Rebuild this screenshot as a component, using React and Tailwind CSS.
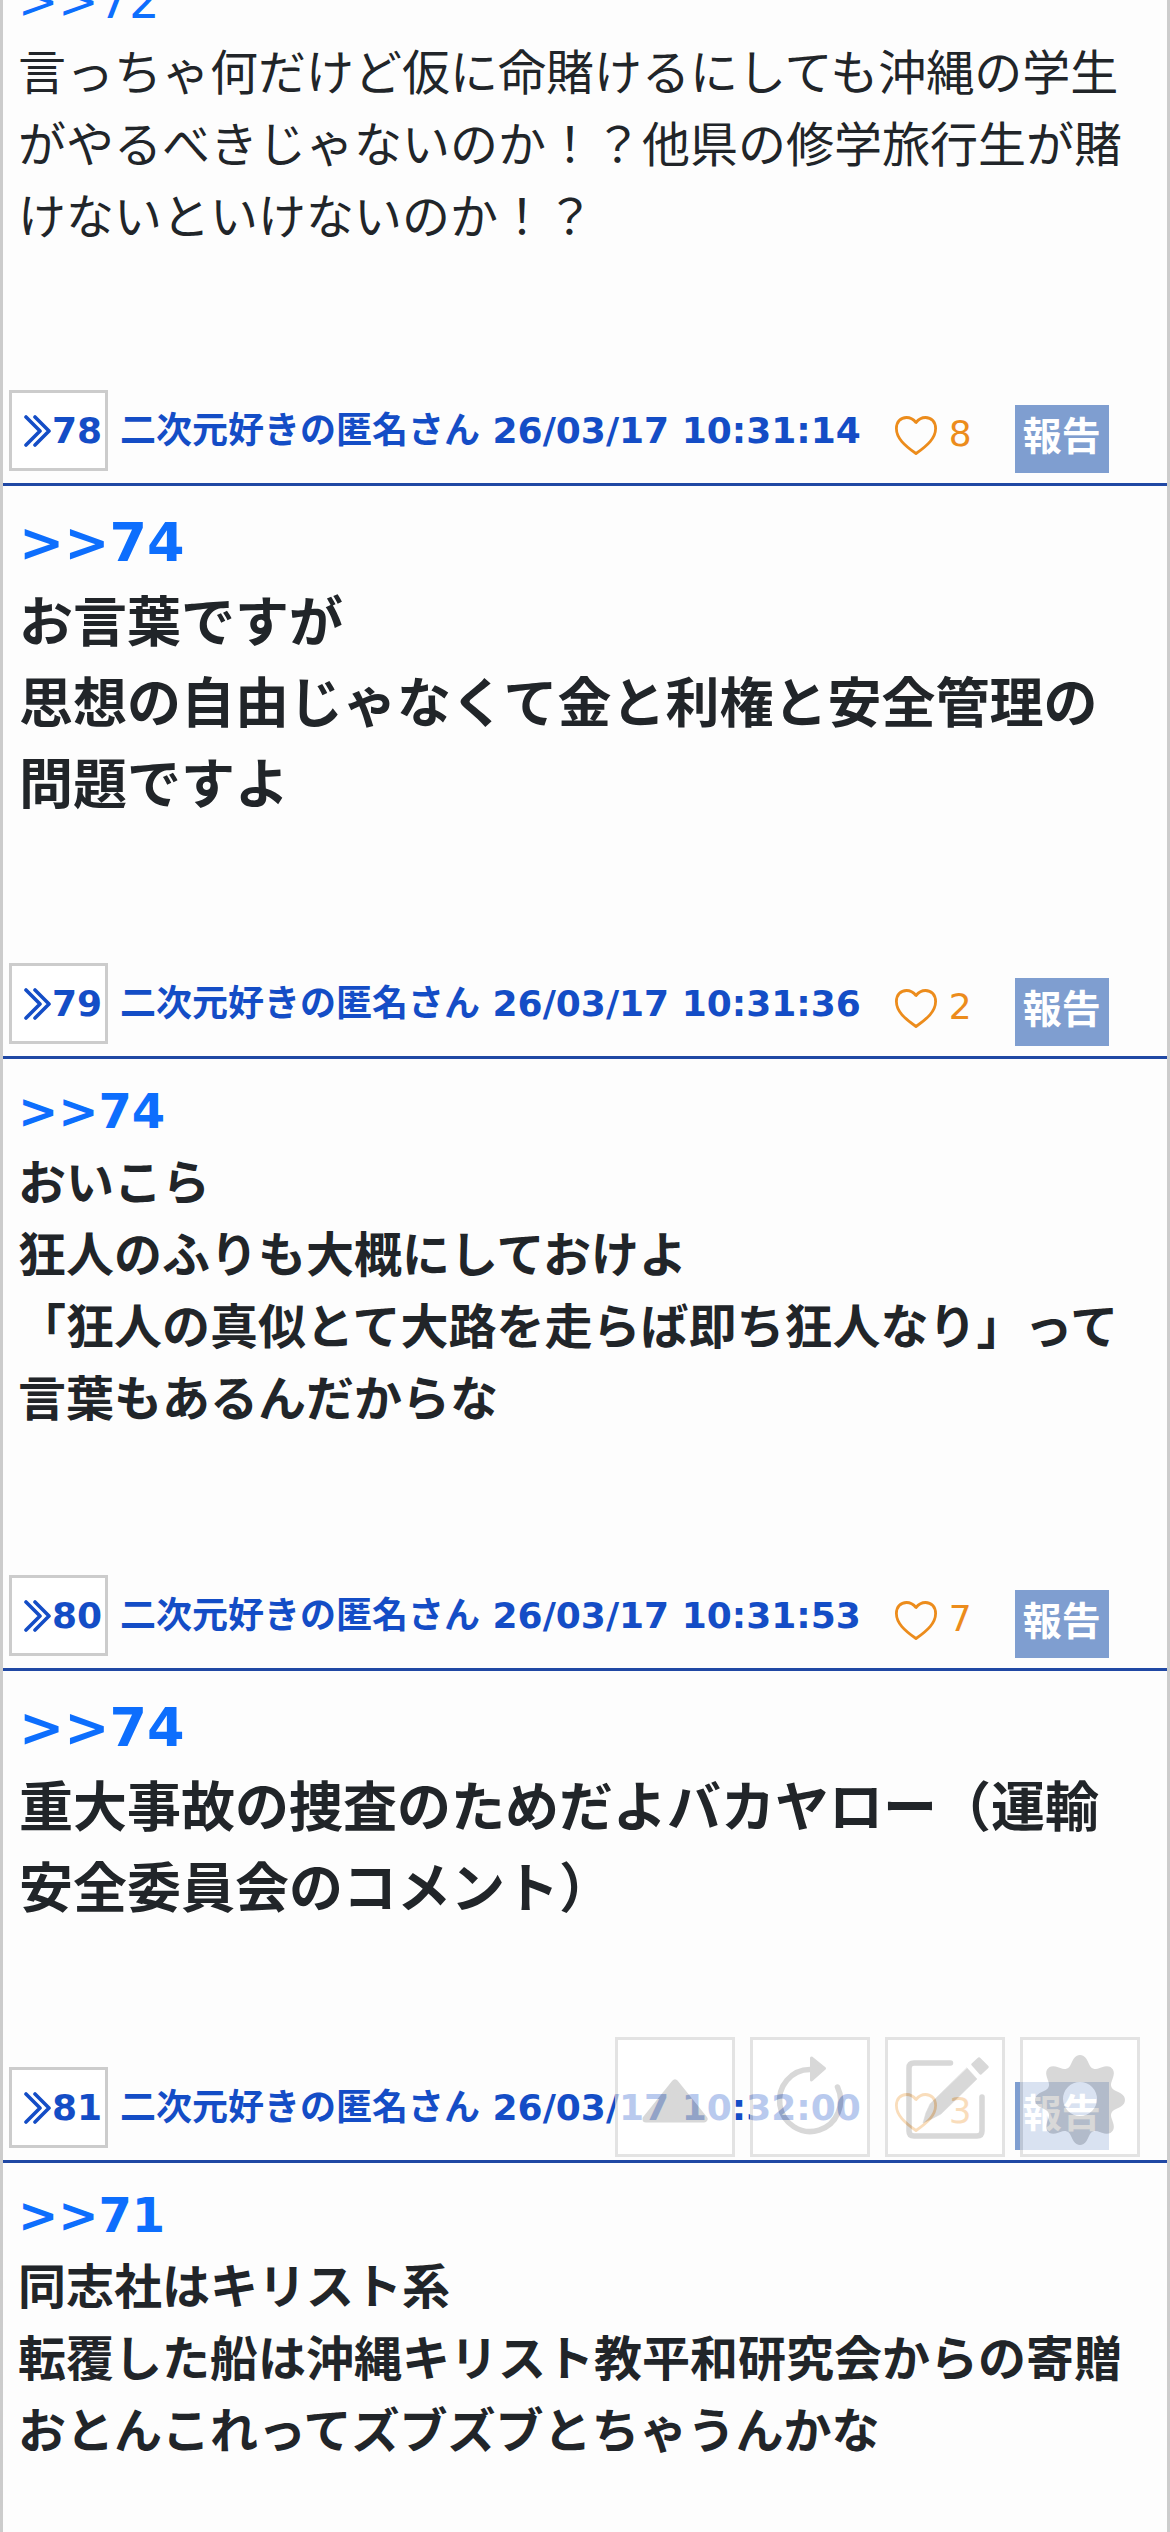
const posts = [
  {
    id: 77,
    replyTo: 72,
    size: 'normal',
    text: '言っちゃ何だけど仮に命賭けるにしても沖縄の学生がやるべきじゃないのか！？他県の修学旅行生が賭けないといけないのか！？',
  },
  {
    id: 78,
    time: '26/03/17 10:31:14',
    likes: 8,
    replyTo: 74,
    size: 'large',
    text: 'お言葉ですが\n思想の自由じゃなくて金と利権と安全管理の問題ですよ',
  },
  {
    id: 79,
    time: '26/03/17 10:31:36',
    likes: 2,
    replyTo: 74,
    size: 'bold',
    text: 'おいこら\n狂人のふりも大概にしておけよ\n「狂人の真似とて大路を走らば即ち狂人なり」って言葉もあるんだからな',
  },
  {
    id: 80,
    time: '26/03/17 10:31:53',
    likes: 7,
    replyTo: 74,
    size: 'large',
    text: '重大事故の捜査のためだよバカヤロー（運輸安全委員会のコメント）',
  },
  {
    id: 81,
    time: '26/03/17 10:32:00',
    likes: 3,
    replyTo: 71,
    size: 'bold',
    text: '同志社はキリスト系\n転覆した船は沖縄キリスト教平和研究会からの寄贈\nおとんこれってズブズブとちゃうんかな',
  },
];

const bodySizes = {
  normal: 'px-[15px] pt-4 pb-[137px] text-5xl leading-[72px] font-normal',
  bold: 'px-[15px] pt-4 pb-[140px] text-5xl leading-[72px] font-bold',
  large: 'px-4 pt-4 pb-[137px] text-[54px] leading-[81px] font-bold',
};

// outline of the settings gear: a circle with eight blunt lobes
const gearOutline = Array.from({ length: 160 }, (_, i) => {
  const a = (i / 160) * Math.PI * 2;
  const r = 39.5 + 6.5 * Math.sin(Math.cos(8 * a));
  return `${(60 + r * Math.cos(a)).toFixed(2)},${(63 + r * Math.sin(a)).toFixed(2)}`;
}).join('L');

function QuoteIcon() {
  return (
    <svg className="h-8 w-7 shrink-0" viewBox="0 0 28 32" fill="none" stroke="currentColor" strokeWidth="3.600" strokeLinecap="round" strokeLinejoin="round" aria-hidden="true">
      <path d="M2 2L16 16L2 30M11 2L25 16L11 30" />
    </svg>
  );
}

function HeartIcon() {
  return (
    <svg className="mt-[9px] h-[39px] w-[42px] shrink-0" viewBox="0 0 42 39" fill="none" stroke="currentColor" strokeWidth="2.800" strokeLinejoin="round" aria-hidden="true">
      <path d="M21 6.500C18 2.800 15 1.500 11.500 1.500C5.500 1.500 1.400 6 1.400 12.500C1.400 22 9.500 29.500 21 37.500C32.500 29.500 40.600 22 40.600 12.500C40.600 6 36.500 1.500 30.500 1.500C27 1.500 24 2.800 21 6.500Z" />
    </svg>
  );
}

function PostHeader({ post }) {
  return (
    <header className="flex h-24 items-start border-b-[3px] border-[#2048a4] pl-[6px] text-4xl leading-[54px] whitespace-nowrap text-[#144dc6]">
      <button type="button" className="flex h-[81px] w-[99px] shrink-0 items-start border-[3px] border-[#ccc] bg-white pt-[11px] pl-3 font-bold">
        <span className="flex h-[54px] items-center">
          <QuoteIcon />
        </span>
        {post.id}
      </button>
      <span className="mt-[14px] ml-3 font-bold">
        二次元好きの匿名さん <time>{post.time}</time>
      </span>
      <button type="button" className="mt-[17px] ml-[34px] flex items-start gap-3 text-[#ec8c1c]" aria-label="いいね">
        <HeartIcon />
        {post.likes}
      </button>
      <button type="button" className="mt-[15px] ml-[43px] h-[68px] shrink-0 bg-[#7f9ed0] px-2 text-[39px] leading-[63px] font-bold text-white">
        <span className="block h-full">報告</span>
      </button>
    </header>
  );
}

function Post({ post }) {
  return (
    <article>
      {post.time && <PostHeader post={post} />}
      <div className={bodySizes[post.size]}>
        <a href={`#res${post.replyTo}`} className="text-[#0d6efd]">
          &gt;&gt;{post.replyTo}
        </a>
        <p className="whitespace-pre-line">{post.text}</p>
      </div>
    </article>
  );
}

function ToolButton({ label, children }) {
  return (
    <button type="button" aria-label={label} className="size-[120px] border-[3px] border-[#d8d8d8] bg-white text-[#c8c8c8] opacity-70">
      <svg className="size-full" viewBox="3 3 114 114" fill="none" stroke="currentColor" strokeLinecap="round" strokeLinejoin="round" aria-hidden="true">
        {children}
      </svg>
    </button>
  );
}

function FloatingTools() {
  return (
    <nav className="fixed right-[30px] bottom-[375px] flex gap-[15px]">
      <ToolButton label="上へ">
        <path d="M60 46L89 82H31Z" fill="currentColor" strokeWidth="7" />
      </ToolButton>
      <ToolButton label="更新">
        <path d="M60 32.500A30.500 31 0 1 0 87.500 50" strokeWidth="5.500" />
        <path d="M61.500 21L74.500 31.500L61.500 43Z" fill="currentColor" strokeWidth="3" />
      </ToolButton>
      <ToolButton label="書き込む">
        <path d="M65.500 26H29Q24 26 24 31V94Q24 99 29 99H92Q97 99 97 94V60" strokeWidth="5.500" />
        <path d="M82 31L92 42L56 77Q47 82 38 86Q40 76 45 67Z" fill="currentColor" strokeWidth="0.500" />
        <path d="M94 21.500L102.500 30L95.500 36.500L87.500 27.500Z" fill="currentColor" strokeWidth="2.500" />
      </ToolButton>
      <ToolButton label="設定">
        <path d={`M${gearOutline}ZM43 62a17 17 0 1 0 34 0a17 17 0 1 0 -34 0Z`} fill="currentColor" fillRule="evenodd" stroke="none" />
      </ToolButton>
    </nav>
  );
}

function App() {
  return (
    <main lang="ja" className="h-screen overflow-hidden border-x-[3px] border-[#ccc] bg-[#fdfdfd] font-['DejaVu_Sans','Noto_Sans_CJK_JP',sans-serif] text-[#212529]">
      {/* the thread is scrolled part way into the first post */}
      <div className="-mt-[51px]">
        {posts.map((post) => (
          <Post key={post.id} post={post} />
        ))}
      </div>
      <FloatingTools />
    </main>
  );
}

export default App;
